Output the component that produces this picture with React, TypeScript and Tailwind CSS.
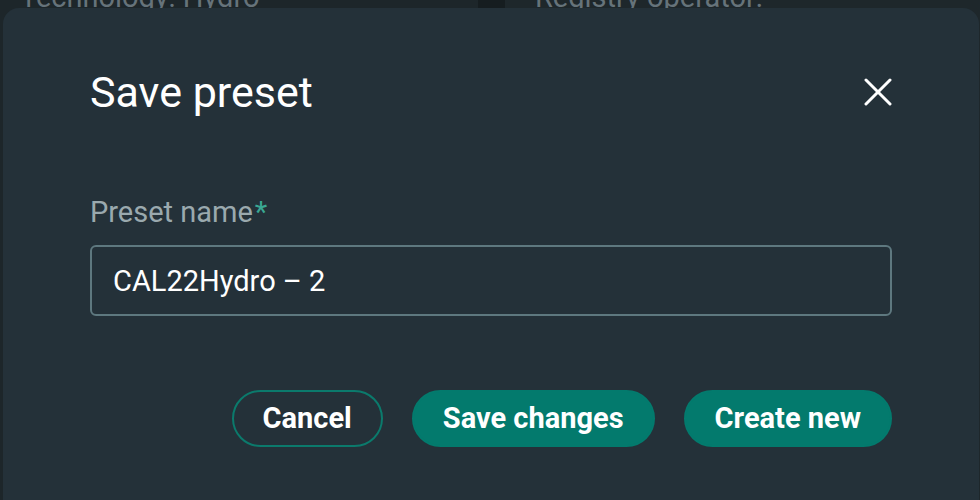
export default function App() {
  return (
    <div className="relative h-[500px] w-[980px] overflow-hidden bg-[#1c2529] font-['Roboto',sans-serif]">
      {/* page behind the dialog */}
      <div className="flex h-full">
        <div className="w-[478px] bg-[#1d262a] pl-[20px]">
          <p className="-mt-[18px] text-[29px] leading-[30px] text-[#66737a]">Technology: Hydro</p>
        </div>
        <div className="w-[27px] bg-[#161d20]" />
        <div className="flex-1 bg-[#1e272b] pl-[30px]">
          <p className="-mt-[18px] text-[29px] leading-[30px] text-[#66737a]">Registry operator:</p>
        </div>
      </div>

      {/* dialog */}
      <div className="absolute top-[8px] left-[3px] right-[1px] h-[520px] rounded-2xl bg-[#243139] px-[87px] pt-[59px]">
        <div className="flex items-center justify-between">
          <h2 className="text-[43px] leading-[50px] text-white">Save preset</h2>
          <button className="flex h-[28px] w-[28px] items-center justify-center text-white">
            <svg width="28" height="28" viewBox="0 0 28 28" fill="none" stroke="currentColor" strokeWidth="3" strokeLinecap="round">
              <path d="M2 2L26 26" />
              <path d="M26 2L2 26" />
            </svg>
          </button>
        </div>

        <label className="mt-[78px] block text-[29px] leading-[34px] text-[#9aa9ae]">
          Preset name<span className="ml-[2px] text-[#3aa893]">*</span>
        </label>
        <input
          defaultValue="CAL22Hydro – 2"
          className="mt-[16px] h-[71px] w-full rounded-md border-2 border-[#5e787f] bg-transparent px-[21px] text-[29px] text-white outline-none"
        />

        <div className="mt-[74px] flex justify-end gap-[29px]">
          <button className="h-[57px] rounded-full border-2 border-[#0b7a6c] px-[29px] text-[29px] font-bold text-white">
            Cancel
          </button>
          <button className="h-[57px] rounded-full border-2 border-[#037a6d] bg-[#037a6d] px-[29px] text-[29px] font-bold text-white">
            Save changes
          </button>
          <button className="h-[57px] rounded-full border-2 border-[#037a6d] bg-[#037a6d] px-[29px] text-[29px] font-bold text-white">
            Create new
          </button>
        </div>
      </div>
    </div>
  );
}
